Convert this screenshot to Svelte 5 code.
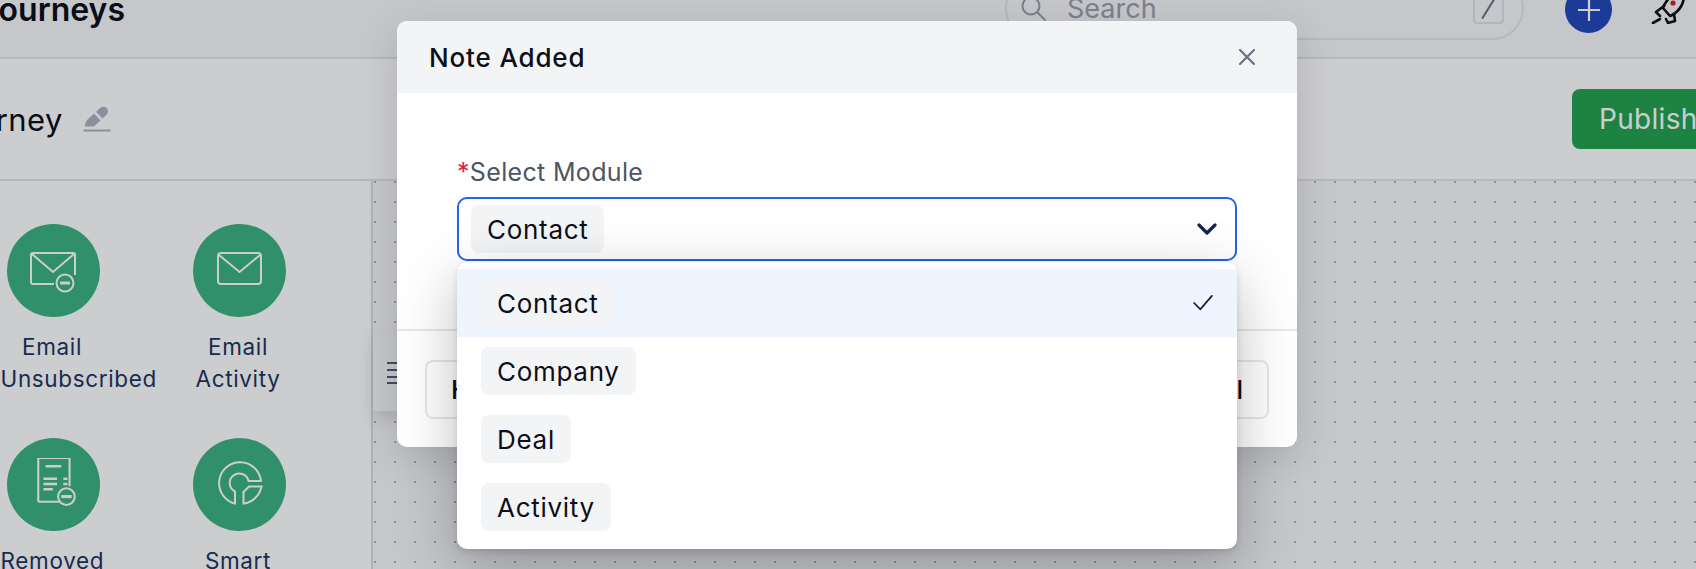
<script>
  const tiles = [
    { label: 'Email Unsubscribed', icon: 'unsub' },
    { label: 'Email Activity', icon: 'mail' },
    { label: 'Removed from List', icon: 'removed' },
    { label: 'Smart Segment', icon: 'smart' }
  ];
  const modules = ['Contact', 'Company', 'Deal', 'Activity'];
</script>

<div class="page">
  <header class="topbar">
    <h1 class="brand">Journeys</h1>
    <div class="search">
      <svg class="mag" viewBox="0 0 26 26" width="26" height="26" fill="none" stroke="#9aa0aa" stroke-width="2"><circle cx="10" cy="10" r="8.500"/><path d="M16.500 16.500l7.500 7.500" stroke-linecap="round"/></svg>
      <span class="search-text">Search</span>
      <span class="slash"><svg viewBox="0 0 30 30" width="30" height="30" fill="none" stroke="#707784" stroke-width="2.400" stroke-linecap="round"><path d="M8.500 27L24 2"/></svg></span>
    </div>
    <button class="plus" aria-label="Add">
      <svg viewBox="0 0 24 24" width="24" height="24" stroke="#fff" stroke-width="2.200" fill="none"><path d="M12 1v22M1 12h22"/></svg>
    </button>
    <svg class="rocket" viewBox="0 0 36 32" width="36" height="32" fill="none" stroke="#0d0f14" stroke-width="2.600" stroke-linecap="round" stroke-linejoin="round">
      <path d="M34 0C26 0 17 5 13 16L20 24C30 20 35 10 34 0Z"/>
      <circle cx="23" cy="11" r="2.600" fill="#d3202a" stroke="none"/>
      <path d="M14 14L6 20L10 24M24 22L25 29L18 31L16 27M3 31L10 27"/>
    </svg>
  </header>

  <section class="subbar">
    <span class="journey-name">Journey</span>
    <svg class="pencil" viewBox="0 0 28 28" width="28" height="28" fill="#aeb4c0">
      <path d="M2 22.500c0-3 .8-5.500 2.800-7.300L11 9.500l6.500 7-6.200 5.400c-.6.400-1.200.6-2 .6z"/>
      <path d="M13 7.700l4-3.700c2-1.800 5-1.800 6.800.2s1.600 4.800-.3 6.600l-4 3.700z"/>
      <rect x="0.500" y="25.500" width="27" height="2"/>
    </svg>
    <button class="publish">Publish</button>
  </section>

  <main class="body">
    <aside class="sidebar">
      {#each tiles as t}
        <div class="tile">
          <div class="circle">
            {#if t.icon === 'unsub'}
              <svg class="ic-down" viewBox="0 0 46 46" width="46" height="46" fill="none" stroke="#fff" stroke-width="2">
                <path d="M24 33H3c-1 0-2-1-2-2V4c0-1 1-2 2-2h40c1 0 2 1 2 2v20"/>
                <path d="M2 3l21 18L44 3"/>
                <circle cx="35" cy="32" r="8.500"/>
                <path d="M30 32h10" stroke-width="3"/>
              </svg>
            {:else if t.icon === 'mail'}
              <svg class="ic-down" viewBox="0 0 46 46" width="46" height="46" fill="none" stroke="#fff" stroke-width="2">
                <rect x="2" y="2" width="43" height="31" rx="3"/>
                <path d="M3 4l20.500 17L44 4"/>
              </svg>
            {:else if t.icon === 'removed'}
              <svg class="ic-doc" viewBox="0 0 46 46" width="48" height="48" fill="none" stroke="#fff" stroke-width="2">
                <path d="M26 42H7c-.6 0-1-.4-1-1V1c0-.6.4-1 1-1h28c.6 0 1 .4 1 1v26"/>
                <path d="M13 8h15M11 20h13M11 25h13M11 30h9M30 20h4M30 25h4" stroke-width="2.400"/>
                <circle cx="33" cy="37" r="8"/>
                <path d="M28 37h10" stroke-width="3"/>
              </svg>
            {:else}
              <svg class="ic-smart" viewBox="0 0 46 46" width="46" height="46" fill="none" stroke="#fff" stroke-width="2">
                <path d="M44 21A21 21 0 1 0 18 43.500V31.500A9.500 9.500 0 1 1 31.500 21Z"/>
                <path d="M26.500 43.500V32L32 26.500H44.500A21 21 0 0 1 26.500 43.500Z"/>
              </svg>
            {/if}
          </div>
          <div class="tile-label">{t.label}</div>
        </div>
      {/each}
    </aside>
    <div class="canvas">
      <div class="toolbar">
        <svg viewBox="0 0 12 24" width="12" height="24" stroke="#1b2b4b" stroke-width="1.600"><path d="M0 2h12M0 9h12M0 16h12M0 22h12"/></svg>
      </div>
    </div>
  </main>

  <div class="overlay"></div>

  <div class="modal">
    <div class="modal-head">
      <span class="modal-title">Note Added</span>
      <svg viewBox="0 0 18 18" width="18" height="18" stroke="#6b7280" stroke-width="2.200" stroke-linecap="round"><path d="M2 2l14 14M16 2L2 16"/></svg>
    </div>
    <div class="modal-body">
      <div class="field-label"><span class="req">*</span>Select Module</div>
      <div class="select">
        <span class="chip">Contact</span>
        <svg class="chev" viewBox="0 0 20 12" width="20" height="12" fill="none" stroke="#14264a" stroke-width="3.200" stroke-linecap="round" stroke-linejoin="round"><path d="M2 2l8 8 8-8"/></svg>
      </div>
    </div>
    <div class="modal-foot">
      <button class="btn">Help</button>
      <button class="btn">Cancel</button>
    </div>
    <div class="menu">
      {#each modules as m, i}
        <div class="opt" class:active={i === 0}>
          <span class="chip">{m}</span>
          {#if i === 0}
            <svg class="check" viewBox="0 0 22 18" width="20" height="16" fill="none" stroke="#111827" stroke-width="1.900" stroke-linecap="round"><path d="M1 9l7 7L21 1"/></svg>
          {/if}
        </div>
      {/each}
    </div>
  </div>
</div>

<style>
  :global(body) {
    margin: 0;
    font-family: Inter, "Liberation Sans", sans-serif;
  }
  button { font: inherit; border: none; }
  .page {
    position: relative;
    width: 1696px;
    height: 569px;
    overflow: hidden;
    background: #fff;
    display: flex;
    flex-direction: column;
  }
  .topbar {
    height: 57px;
    flex: none;
    background: #f7f8fa;
    border-bottom: 2px solid #e4e5e9;
    box-sizing: content-box;
    position: relative;
    display: flex;
    align-items: flex-end;
  }
  .brand {
    margin: 0 0 29px -20px;
    font-size: 32px;
    line-height: 36px;
    font-weight: 600;
    color: #0b0f19;
  }
  .search {
    margin-left: auto;
    margin-bottom: 17px;
    width: 519px;
    height: 64px;
    box-sizing: border-box;
    border: 2px solid #e4e5e9;
    border-radius: 32px;
    display: flex;
    align-items: flex-end;
    padding: 0 18px 8px 14px;
  }
  .mag { margin-bottom: 8px; margin-right: 20px; }
  .search-text {
    font-size: 27px;
    line-height: 32px;
    margin-bottom: 5px;
    color: #9ca1ab;
  }
  .slash {
    margin-left: auto;
    margin-bottom: 6px;
    width: 31px;
    height: 34px;
    box-sizing: border-box;
    border: 2px solid #e0e2e7;
    border-radius: 4px;
    display: flex;
    justify-content: center;
    align-items: flex-end;
    overflow: hidden;
  }
  .plus {
    width: 47px;
    height: 47px;
    border-radius: 50%;
    background: #2349bb;
    padding: 0;
    margin-left: 41px;
    margin-bottom: 24px;
    display: flex;
    align-items: center;
    justify-content: center;
  }
  .rocket { margin: 0 10px 33px 38px; }
  .subbar {
    height: 120px;
    flex: none;
    background: #fff;
    border-bottom: 2px solid #e4e5e9;
    display: flex;
    align-items: center;
  }
  .journey-name {
    margin-left: -60px;
    font-size: 31px;
    letter-spacing: 0.4px;
    color: #0b0f19;
    font-weight: 400;
  }
  .pencil { margin-left: 20px; margin-top: -2px; }
  .publish {
    margin-left: auto;
    margin-right: -40px;
    margin-top: -1px;
    width: 164px;
    height: 60px;
    background: #24a350;
    color: #fff;
    font-size: 28px;
    letter-spacing: 0.3px;
    border-radius: 8px;
    text-align: left;
    padding: 0 0 0 27px;
  }
  .body {
    flex: 1;
    display: flex;
    min-height: 0;
  }
  .sidebar {
    width: 413px;
    margin-left: -40px;
    flex: none;
    box-sizing: border-box;
    border-right: 2px solid #dcdde2;
    display: grid;
    grid-template-columns: 186px 186px;
    grid-auto-rows: 214px;
    padding-top: 43px;
    background: #fff;
  }
  .tile {
    display: flex;
    flex-direction: column;
    align-items: center;
  }
  .circle {
    width: 93px;
    height: 93px;
    border-radius: 50%;
    background: #3db383;
    display: flex;
    align-items: center;
    justify-content: center;
  }
  .ic-down { margin-top: 6px; }
  .ic-doc { margin: -6px 0 0 5px; }
  .ic-smart { margin: -4px 0 0 2px; }
  .tile-label {
    margin-top: 14px;
    margin-right: 2px;
    width: 103px;
    text-align: center;
    font-size: 22.500px;
    letter-spacing: 0.65px;
    line-height: 32px;
    color: #1f3560;
  }
  .canvas {
    flex: 1;
    background-color: #f7f8fa;
    background-image: radial-gradient(circle at 2px 1px, #b4b5b9 1.3px, transparent 1.4px);
    background-size: 20px 20px;
    padding-top: 154px;
  }
  .toolbar {
    width: 500px;
    height: 76px;
    background: #f7f8fa;
    display: flex;
    align-items: center;
    padding-left: 14px;
    box-sizing: border-box;
    box-shadow: 0 6px 16px rgba(0, 0, 0, 0.12);
  }
  .overlay {
    position: absolute;
    inset: 0;
    background: rgba(0, 5, 15, 0.2);
  }
  .modal {
    position: absolute;
    left: 397px;
    top: 21px;
    width: 900px;
    height: 426px;
    background: #fff;
    border-radius: 10px;
    box-shadow: 0 10px 40px rgba(0, 0, 0, 0.14);
    display: flex;
    flex-direction: column;
  }
  .modal-head {
    height: 72px;
    flex: none;
    background: #f3f4f6;
    border-radius: 10px 10px 0 0;
    display: flex;
    align-items: center;
    justify-content: space-between;
    padding: 0 41px 0 32px;
  }
  .modal-title {
    font-size: 26px;
    font-weight: 500;
    letter-spacing: 0.85px;
    color: #0b0f19;
  }
  .modal-body {
    flex: 1;
    padding: 0 60px;
  }
  .field-label {
    margin-top: 63px;
    font-size: 25px;
    letter-spacing: 0.33px;
    line-height: 32px;
    color: #4b5563;
  }
  .req { color: #e11d48; }
  .select {
    margin-top: 9px;
    height: 64px;
    box-sizing: border-box;
    border: 2px solid #2563eb;
    border-radius: 10px;
    display: flex;
    align-items: center;
    justify-content: space-between;
    padding: 0 18px 0 12px;
  }
  .chip {
    display: inline-flex;
    align-items: center;
    height: 48px;
    padding: 0 16px;
    background: #f3f4f6;
    border-radius: 8px;
    font-size: 26px;
    letter-spacing: 0.7px;
    color: #0b0f19;
  }
  .modal-foot {
    height: 118px;
    flex: none;
    border-top: 2px solid #e5e7eb;
    box-sizing: border-box;
    display: flex;
    align-items: center;
    justify-content: space-between;
    padding: 0 28px;
  }
  .btn {
    height: 59px;
    padding: 0 24px;
    background: #fff;
    border: 2px solid #e5e7eb;
    border-radius: 8px;
    font-size: 26px;
    font-weight: 500;
    color: #0b0f19;
  }
  .menu {
    position: absolute;
    left: 60px;
    top: 241px;
    width: 780px;
    height: 287px;
    box-sizing: border-box;
    padding-top: 7px;
    background: #fff;
    border-radius: 10px;
    box-shadow: 0 18px 60px rgba(0, 0, 0, 0.26), 0 3px 6px rgba(0, 0, 0, 0.12);
  }
  .opt {
    height: 68px;
    display: flex;
    align-items: center;
    justify-content: space-between;
    padding: 0 24px;
  }
  .opt.active { background: #eef5fe; }
</style>
